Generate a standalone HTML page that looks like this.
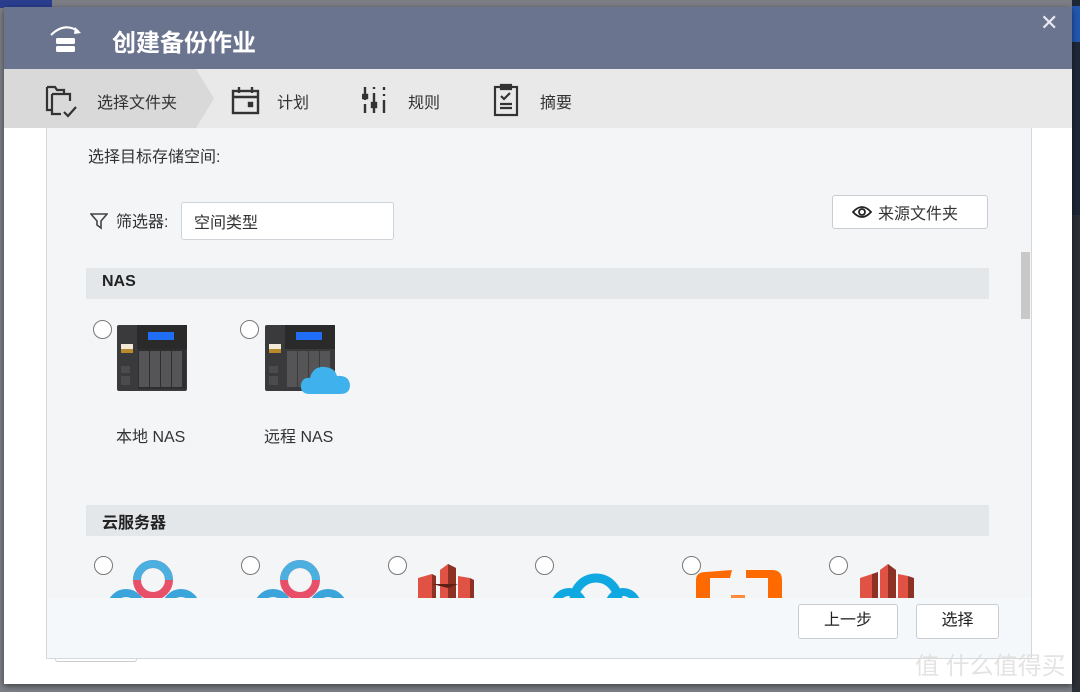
<!DOCTYPE html>
<html><head><meta charset="utf-8"><style>
*{margin:0;padding:0;box-sizing:border-box}
body{width:1080px;height:692px;overflow:hidden;background:#7c7f86;font-family:"Liberation Sans","Noto Sans CJK SC",sans-serif;position:relative}
.abs{position:absolute}
.t{color:#333;font-size:16px}
.radio{position:absolute;width:19px;height:19px;border:1.5px solid #777;border-radius:50%;background:#fff}
</style></head><body>
<div class="abs" style="left:0;top:0;width:52px;height:8px;background:#2a3d8f"></div>
<div class="abs" style="left:1072px;top:0;width:8px;height:692px;background:#1e2738"></div>
<div class="abs" style="left:1072px;top:6px;width:8px;height:36px;background:#2357b0"></div>
<div class="abs" style="left:1072px;top:215px;width:8px;height:477px;background:#2b2f36"></div>
<div class="abs" style="left:4px;top:7px;width:1068px;height:677px;background:#fff;box-shadow:0 2px 6px rgba(0,0,0,.5)"></div>
<div class="abs" style="left:4px;top:7px;width:1068px;height:62px;background:#6a748f"></div>
<svg class="abs" style="left:46px;top:22px" width="40" height="34" viewBox="0 0 40 34">
<path d="M5 13 Q18 0 32 9" fill="none" stroke="#fff" stroke-width="2"/><path d="M29 5 L35 11 L28 12Z" fill="#fff"/>
<rect x="10" y="16" width="19" height="6" rx="1.5" fill="#fff"/><rect x="10" y="24" width="19" height="6" rx="1.5" fill="#fff"/>
</svg>
<div class="abs" style="left:112px;top:23px;color:#fff;font-size:24px;font-weight:bold">创建备份作业</div>
<div class="abs" style="left:1040px;top:10px;color:#e8eaf0;font-size:22px">✕</div>
<div class="abs" style="left:4px;top:69px;width:1068px;height:59px;background:#e9e9e9"></div>
<svg class="abs" style="left:4px;top:69px" width="210" height="59"><path d="M0 0H192L210 29.5L192 59H0Z" fill="#d9d9d9"/></svg>
<svg class="abs" style="left:44px;top:84px" width="36" height="34" fill="none" stroke="#333" stroke-width="2.2">
<path d="M3 3H11L13 6H20V10"/><path d="M3 3V26H8"/><path d="M8 10H26V17"/><path d="M8 10V30H17"/><path d="M20 28L24 32L32 23"/></svg>
<div class="abs t" style="left:97px;top:89px">选择文件夹</div>
<svg class="abs" style="left:231px;top:86px" width="30" height="30" fill="none" stroke="#333" stroke-width="2.4"><rect x="2" y="5" width="25" height="22"/><path d="M2 11H27M8 1V7M21 1V7"/><rect x="18" y="17" width="3" height="3" fill="#333"/></svg>
<div class="abs t" style="left:277px;top:89px">计划</div>
<svg class="abs" style="left:362px;top:86px" width="28" height="28" stroke="#333" stroke-width="2.4"><path d="M3 1V8M3 12V14M3 18V27M12 1V3M12 7V16M12 21V27M22 1V4M22 8V10M22 14V27"/><rect x="1" y="9" width="4" height="3" fill="#333"/><rect x="10" y="17" width="4" height="4" fill="#333"/></svg>
<div class="abs t" style="left:408px;top:89px">规则</div>
<svg class="abs" style="left:493px;top:83px" width="28" height="34" fill="none" stroke="#333" stroke-width="2.2"><rect x="2" y="4" width="22" height="28"/><path d="M8 2H18V6H8Z"/><path d="M8 13L11 16L17 10M7 21H19M7 25H19"/></svg>
<div class="abs t" style="left:540px;top:89px">摘要</div>
<div class="abs" style="left:46px;top:128px;width:986px;height:531px;background:#f3f5f7;border:1px solid #d5d7da;border-top:none"></div>
<div class="abs" style="left:55px;top:659px;width:82px;height:3px;border:1px solid #ccc;border-top:none;border-radius:0 0 3px 3px"></div>
<div class="abs t" style="left:88px;top:143px">选择目标存储空间:</div>
<svg class="abs" style="left:90px;top:212px" width="18" height="18" fill="none" stroke="#444" stroke-width="1.6"><path d="M1 2H17L11 9V16L7 13V9Z"/></svg>
<div class="abs" style="left:116px;top:208px;font-size:16px;color:#333">筛选器:</div>
<div class="abs" style="left:181px;top:202px;width:213px;height:38px;background:#fff;border:1px solid #cfd2d6;border-radius:3px;padding:6px 12px;font-size:16px;color:#333">空间类型</div>
<div class="abs" style="left:832px;top:195px;width:156px;height:34px;background:#fff;border:1px solid #c9ccd0;border-radius:3px;font-size:16px;color:#333;padding:4px 0 0 45px">来源文件夹</div>
<svg class="abs" style="left:852px;top:205px" width="20" height="14" fill="none" stroke="#222" stroke-width="1.8"><path d="M1 7Q10 -3 19 7Q10 17 1 7Z"/><circle cx="10" cy="7" r="3"/></svg>
<div class="abs" style="left:1021px;top:252px;width:9px;height:67px;background:#c8c8c8"></div>
<div class="abs" style="left:86px;top:268px;width:903px;height:31px;background:#e4e7ea;font-weight:bold;font-size:16px;color:#222;padding:5px 0 0 16px">NAS</div>
<div class="radio" style="left:93px;top:320px"></div>
<div class="radio" style="left:240px;top:320px"></div>
<svg class="abs" style="left:116px;top:324px" width="72" height="68"><rect x="1" y="1" width="70" height="66" rx="2" fill="#3a3a3c"/><rect x="21" y="1" width="50" height="24" fill="#2a2a2b"/><rect x="32" y="8" width="26" height="8" fill="#1f6ef5"/><rect x="22" y="25" width="48" height="40" fill="#2e2e30"/><g fill="#555558"><rect x="23" y="27" width="10" height="36"/><rect x="34" y="27" width="10" height="36"/><rect x="45" y="27" width="10" height="36"/><rect x="56" y="27" width="10" height="36"/></g><rect x="5" y="20" width="12" height="9" fill="#f3e9d8"/><rect x="5" y="25" width="12" height="4" fill="#b78a2e"/><rect x="5" y="42" width="9" height="7" fill="#4b4b4d"/><rect x="5" y="52" width="9" height="9" fill="#4b4b4d"/></svg>
<svg class="abs" style="left:264px;top:324px" width="88" height="72"><rect x="1" y="1" width="70" height="66" rx="2" fill="#3a3a3c"/><rect x="21" y="1" width="50" height="24" fill="#2a2a2b"/><rect x="32" y="8" width="26" height="8" fill="#1f6ef5"/><g fill="#555558"><rect x="23" y="27" width="10" height="36"/><rect x="34" y="27" width="10" height="36"/><rect x="45" y="27" width="10" height="36"/><rect x="56" y="27" width="10" height="36"/></g><rect x="5" y="20" width="12" height="9" fill="#f3e9d8"/><rect x="5" y="25" width="12" height="4" fill="#b78a2e"/><rect x="5" y="42" width="9" height="7" fill="#4b4b4d"/><rect x="5" y="52" width="9" height="9" fill="#4b4b4d"/><path d="M46 70Q36 70 37 61Q38 53 46 54Q49 42 61 43Q71 44 73 52Q85 51 86 61Q86 70 76 70Z" fill="#3fb2ee"/></svg>
<div class="abs t" style="left:116px;top:423px">本地 NAS</div>
<div class="abs t" style="left:264px;top:423px">远程 NAS</div>
<div class="abs" style="left:86px;top:505px;width:903px;height:31px;background:#e4e7ea;font-weight:bold;font-size:16px;color:#222;padding:4px 0 0 16px">云服务器</div>
<div class="abs" style="left:46px;top:550px;width:985px;height:48px;overflow:hidden">
<div class="radio" style="left:48px;top:6px"></div>
<div class="radio" style="left:195px;top:6px"></div>
<div class="radio" style="left:342px;top:6px"></div>
<div class="radio" style="left:489px;top:6px"></div>
<div class="radio" style="left:636px;top:6px"></div>
<div class="radio" style="left:783px;top:6px"></div>
<svg class="abs" style="left:60px;top:8px" width="95" height="45"><circle cx="20" cy="50" r="15" fill="none" stroke="#3ba4da" stroke-width="8"/><circle cx="75" cy="50" r="15" fill="none" stroke="#3ba4da" stroke-width="8"/><circle cx="47" cy="22" r="16" fill="none" stroke="#e8506a" stroke-width="8"/><path d="M31 22A16 16 0 0 1 63 22" fill="none" stroke="#4bb0e0" stroke-width="8"/></svg>
<svg class="abs" style="left:207px;top:8px" width="95" height="45"><circle cx="20" cy="50" r="15" fill="none" stroke="#3ba4da" stroke-width="8"/><circle cx="75" cy="50" r="15" fill="none" stroke="#3ba4da" stroke-width="8"/><circle cx="47" cy="22" r="16" fill="none" stroke="#e8506a" stroke-width="8"/><path d="M31 22A16 16 0 0 1 63 22" fill="none" stroke="#4bb0e0" stroke-width="8"/></svg>
<svg class="abs" style="left:372px;top:12px" width="60" height="40"><path d="M0 16L14 12V40H0Z" fill="#e05243"/><path d="M14 12L18 14V40H14Z" fill="#8c3123"/><path d="M22 8L30 2L38 6V40H22Z" fill="#e05243"/><path d="M30 2L38 6V40H30Z" fill="#8c3123"/><path d="M40 14L52 16V40H40Z" fill="#e05243"/><path d="M52 16L56 18V40H52Z" fill="#8c3123"/><path d="M14 22L40 22L30 26Z" fill="#5e1f16"/></svg>
<svg class="abs" style="left:505px;top:16px" width="90" height="35"><circle cx="45" cy="34" r="22" fill="none" stroke="#10a8e0" stroke-width="9"/><circle cx="18" cy="40" r="14" fill="none" stroke="#10a8e0" stroke-width="8"/><circle cx="72" cy="40" r="14" fill="none" stroke="#10a8e0" stroke-width="8"/></svg>
<svg class="abs" style="left:650px;top:20px" width="88" height="30"><path d="M36 0L34 8H14V30H0V10Q0 2 10 2Z" fill="#ff6a00"/><path d="M50 0H76Q86 0 86 10V30H72V8H50Z" fill="#ff6a00"/><rect x="35" y="25" width="14" height="3" fill="#ff8a3a"/></svg>
<svg class="abs" style="left:814px;top:12px" width="60" height="40"><path d="M0 16L12 12V40H0Z" fill="#e05243"/><path d="M12 12L18 10V40H12Z" fill="#8c3123"/><path d="M20 8L28 2V40H20Z" fill="#e05243"/><path d="M28 2L36 8V40H28Z" fill="#8c3123"/><path d="M38 12L48 14V40H38Z" fill="#e05243"/><path d="M48 14L54 16V40H48Z" fill="#8c3123"/></svg>
</div>
<div class="abs" style="left:47px;top:598px;width:984px;height:60px;background:#f5f8fa"></div>
<div class="abs" style="left:798px;top:604px;width:100px;height:35px;background:#fff;border:1px solid #c9ccd0;border-radius:3px;font-size:16px;color:#222;text-align:center;line-height:31px">上一步</div>
<div class="abs" style="left:916px;top:604px;width:83px;height:35px;background:#fff;border:1px solid #c9ccd0;border-radius:3px;font-size:16px;color:#222;text-align:center;line-height:31px">选择</div>
<div class="abs" style="left:915px;top:646px;font-size:24px;color:rgba(220,220,220,.8)">值 什么值得买</div>
</body></html>
